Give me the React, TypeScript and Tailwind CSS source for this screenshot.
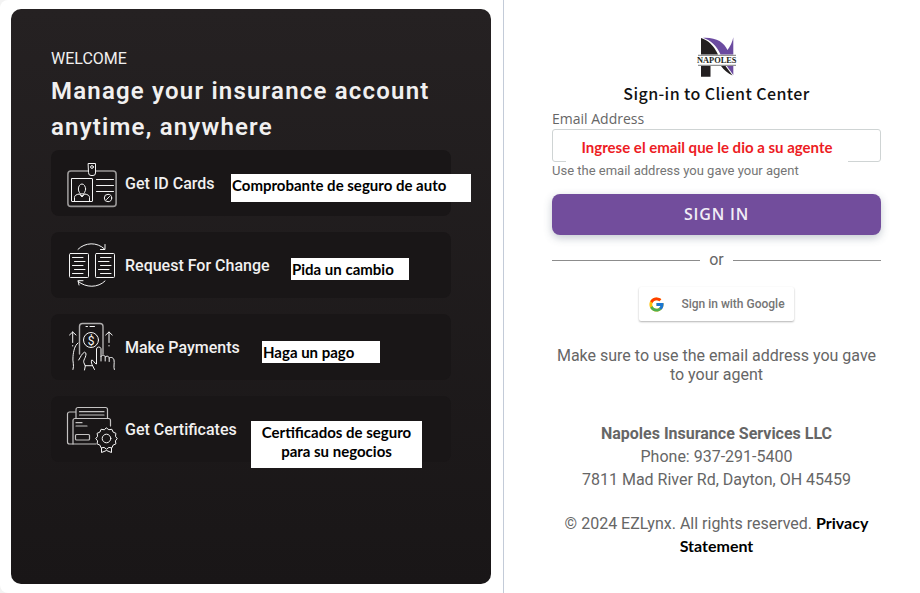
import { useState } from "react";
import type { FormEvent, ReactNode } from "react";
import { FcGoogle } from "react-icons/fc";

function LineIcon({ children }: { children: ReactNode }) {
    return (
        <svg
            viewBox="0 0 50 50" className="size-[50px] shrink-0 overflow-visible"
            fill="none" stroke="#f5f5f5" strokeWidth="1" strokeLinecap="round" strokeLinejoin="round"
            aria-hidden="true"
        >
            {children}
        </svg>
    );
}

function IdCardIcon() {
    return (
        <LineIcon>
            <rect x="0.9" y="13" width="48.2" height="35.4" rx="3" strokeWidth="1.6" stroke="#9a9898" />
            <path d="M21.5 5.5h7v9.5a2.5 2.5 0 0 1-2.5 2.5h-2a2.5 2.5 0 0 1-2.5-2.5z" fill="#191617" />
            <circle cx="25" cy="9" r="1.4" />
            <rect x="4.5" y="20.5" width="21" height="23" rx="0.5" />
            <ellipse cx="15" cy="31" rx="3.6" ry="5" />
            <path d="M7.5 43v-3.5c0-2 1.5-3 5-3.5l2.5 2 2.5-2c3.5.5 5 1.5 5 3.5v3.5M12.5 36l2.5 3 2.5-3" />
            <path d="M29.5 21.5h17M29.5 27.5h17M29.5 33.5h17" />
            <circle cx="41" cy="40" r="3.7" />
            <path d="M39.5 41.5l3-3" />
        </LineIcon>
    );
}

function ChangeIcon() {
    return (
        <LineIcon>
            <rect x="2.5" y="13.5" width="19" height="24" rx="1" />
            <rect x="28.5" y="13.5" width="19" height="24" rx="1" />
            <path d="M5.5 17.5h10.5M7.5 21.5h10.5M5.5 25.5h10.5M7.5 29.5h10.5M5.5 33.5h10.5" />
            <path d="M33.5 17.5h10.5M31.5 21.5h10.5M33.5 25.5h10.5M31.5 29.5h10.5M33.5 33.5h10.5" />
            <path d="M11 9.3C18 2.3 30 1.7 37.5 9M38 4.5V9.5H33.5" />
            <path d="M38 41C31 48 19 48 11 41.3M16 40.7H11L12 45" />
        </LineIcon>
    );
}

function PaymentIcon() {
    return (
        <LineIcon>
            <path d="M12.5 32V4.5a3 3 0 0 1 3-3h17.5a3 3 0 0 1 3 3V32" strokeWidth="1.4" stroke="#b0aeae" />
            <path d="M19 4.5h1.5M23 4.5h4.5" />
            <circle cx="24" cy="18" r="7.5" />
            <text
                x="24" y="22.5" fontSize="12" textAnchor="middle"
                fill="#f5f5f5" stroke="none" fontFamily="Roboto, sans-serif"
            >$</text>
            <path d="M5.7 20.5V10M2.5 13l3.2-3 3.3 3M5.7 23.5v.5M42 20.5V10M38.7 13l3.3-3 3.2 3M42 23.5v.5" />
            <path d="M6 47.5c1.5-4-.7-8 0-13 .5-5 1.5-11 5-13.5M11.7 38c2-3 3-6.5 5.8-7.8 2.2.3 1.5 3 .8 5-1 2.3-2 3.6-1.5 5.3l1.5 3.5-.8 4" />
            <path d="M18.3 43.7h7M27.5 47.5l-2.5-5c-.8-2-.8-3.5-.3-4.5 2 0 2.5 3.5 4.8 4V27a2.3 2.3 0 0 1 4.5-.3V39" />
            <path d="M34 34.5c.5-1.8 3.5-1.8 4.2.3V39M38.2 35c1-1.5 3.5-1 4 .8v3.7M42.2 36c1.5-1.3 4.3-.5 4.8 2 .7 3.5-.7 6.5.3 9.5" />
        </LineIcon>
    );
}

function CertificateIcon() {
    return (
        <LineIcon>
            <g stroke="#c4c2c2" strokeWidth="1.2">
                <path d="M9 14V5.5a2 2 0 0 1 2-2h27.5a2 2 0 0 1 2 2V14" />
                <path d="M8.5 8H2.5a2 2 0 0 0-2 2v28a2 2 0 0 0 2 2H29" />
                <path d="M43.5 22V16.5a2 2 0 0 0-2-2H8a2 2 0 0 0-2 2V40" />
                <path d="M12.5 7.7h24.5M12.5 11h24.5M9 18.7h6M9 22h11" />
                <rect x="8.5" y="30.5" width="14" height="5.5" rx="1" />
            </g>
            <path d="M34.5 42v6.5l5-2 5 2V42" />
            <path
                fill="#191617"
                d="M39.5 24l2.4 1.7 3-.4 1.2 2.8 2.8 1.2-.4 3 1.7 2.3-1.8 2.3.5 3-2.8 1.2-1.2 2.8-3-.5-2.4 1.8-2.4-1.8-3 .5-1.2-2.8-2.8-1.2.5-3-1.8-2.3 1.8-2.3-.5-3 2.8-1.2 1.2-2.8 3 .4z"
            />
            <circle cx="39.5" cy="34.5" r="4.3" />
        </LineIcon>
    );
}

function NapolesLogo() {
    return (
        <svg viewBox="0 0 40 40" className="size-10 overflow-visible" role="img" aria-label="Napoles">
            <path d="M4 1c7 2 13 8 17 16.5H4z" fill="#231f20" />
            <path d="M6 .7C19 0 27 5 30.5 13 33 10 35.5 5 36.3.3v17.2H23.5C20 9 14 3.5 6 .7z" fill="#6b4ba0" />
            <path d="M4 29h9.5v10.7H4zM24 29h4.5l7 9.5C31 36.5 27 33 24 29z" fill="#231f20" />
            <path d="M29.8 29h6.5v9z" fill="#6b4ba0" />
            <path d="M1 18.3h38M1 28.3h38" stroke="#555" strokeWidth="0.8" />
            <text
                x="19.7" y="26.3" fontSize="8.4" textAnchor="middle" fill="#231f20"
                fontFamily="Liberation Serif, serif" fontWeight="bold"
            >NAPOLES</text>
        </svg>
    );
}

// note: white translation tag that sits over the row
const features = [
    { label: "Get ID Cards", icon: <IdCardIcon />, note: "Comprobante de seguro de auto", place: "left-[180px] top-6 h-7 w-60 pl-px leading-[22px]" },
    { label: "Request For Change", icon: <ChangeIcon />, note: "Pida un cambio", place: "left-60 top-[26px] h-[22px] w-[118px] pl-px leading-[22px]" },
    { label: "Make Payments", icon: <PaymentIcon />, note: "Haga un pago", place: "left-[211px] top-[27px] h-[22px] w-[118px] pl-px leading-[22px]" },
    { label: "Get Certificates", icon: <CertificateIcon />, note: "Certificados de seguro para su negocios", place: "left-[200px] top-[25px] h-[47px] w-[171px] px-2 pt-0.5 text-center leading-[19px]" },
];

export default function App() {
    const [email, setEmail] = useState("");

    function handleSubmit(e: FormEvent) {
        e.preventDefault();
    }

    return (
        <div className="min-h-screen bg-[#f3f3f3] font-['Roboto',sans-serif]">
            <div className="grid min-h-screen grid-cols-[503fr_417fr] rounded-l-lg bg-white">
                <section className="flex py-[9px] pr-3 pl-[11px]">
                    <div className="w-full rounded-[10px] bg-linear-to-b from-[#252122] to-[#191617] p-10 text-[#f1f0f0]">
                        <p className="text-base leading-5">WELCOME</p>
                        <h1 className="mt-1 text-2xl leading-9 font-semibold tracking-wider">
                            Manage your insurance account anytime, anywhere
                        </h1>
                        <ul className="mt-[5px] flex flex-col gap-4">
                            {features.map((item) => (
                                <li key={item.label} className="relative">
                                    <a href="#" className="flex h-[66px] items-center gap-2 rounded-lg bg-[#191617] px-4">
                                        {item.icon}
                                        <span className="pt-0.5 text-base font-medium">{item.label}</span>
                                    </a>
                                    <span className={`absolute bg-white font-['Lato',sans-serif] text-[15px] font-bold text-black ${item.place}`}>
                                        {item.note}
                                    </span>
                                </li>
                            ))}
                        </ul>
                    </div>
                </section>

                <main className="flex flex-col border-l border-[#c3cbd8] pt-[37px] pr-[39px] pb-8 pl-12 text-[#666]">
                    <div className="flex flex-col items-center">
                        <NapolesLogo />
                        <h2 className="font-['Noto_Sans_CJK_JP',sans-serif] text-base leading-8 font-medium tracking-wide text-[#111]">
                            Sign-in to Client Center
                        </h2>
                    </div>

                    <form onSubmit={handleSubmit} className="flex flex-col">
                        <label htmlFor="email" className="font-['Open_Sans',sans-serif] text-sm leading-5 font-medium">
                            Email Address
                        </label>
                        <div className="relative">
                            <input
                                id="email" type="email" value={email}
                                onChange={(e) => setEmail(e.target.value)}
                                className="block h-[33px] w-full rounded-[3px] border border-[#cfd4d4] px-3 text-sm"
                            />
                            <span className="pointer-events-none absolute top-1.5 left-3.5 h-7 w-[282px] bg-white text-center font-['Lato',sans-serif] text-[15px] leading-6 font-bold whitespace-nowrap text-[#ed1c24]">
                                Ingrese el email que le dio a su agente
                            </span>
                        </div>
                        <p className="relative text-[13px] leading-[17px] text-[#757575]">
                            Use the email address you gave your agent
                        </p>
                        <button
                            type="submit"
                            className="mt-[15px] h-[41px] rounded-lg bg-[#724d9c] pb-0.5 font-['Open_Sans',sans-serif] text-base font-semibold tracking-wider text-[#f1edf6] shadow-[0_3px_8px_rgba(60,80,100,0.3)]"
                        >
                            SIGN IN
                        </button>
                    </form>

                    <div className="mt-3.5 flex h-[22px] items-center">
                        <hr className="flex-1 border-[#8c8c8c]" />
                        <span className="w-[33px] text-center text-base">or</span>
                        <hr className="flex-1 border-[#8c8c8c]" />
                    </div>

                    <button
                        type="button"
                        className="mt-4 flex h-[34px] items-center gap-4 self-center rounded-xs px-[9px] text-xs font-medium text-[#757575] shadow-[0_1px_2px_rgba(0,0,0,0.3)]"
                    >
                        <FcGoogle className="size-[17px]" />
                        Sign in with Google
                    </button>

                    <p className="mt-[25px] text-center text-base leading-[19px]">
                        Make sure to use the email address you gave to your agent
                    </p>

                    <address className="mt-[38px] text-center text-base leading-[23px] not-italic">
                        <strong className="font-bold">Napoles Insurance Services LLC</strong>
                        <p>Phone: 937-291-5400</p>
                        <p>7811 Mad River Rd, Dayton, OH 45459</p>
                    </address>

                    <footer className="mt-[21px] text-center text-base leading-[22px]">
                        © 2024 EZLynx. All rights reserved.{" "}
                        <a href="#" className="font-['Lato',sans-serif] font-bold text-black">Privacy Statement</a>
                    </footer>
                </main>
            </div>
        </div>
    );
}
